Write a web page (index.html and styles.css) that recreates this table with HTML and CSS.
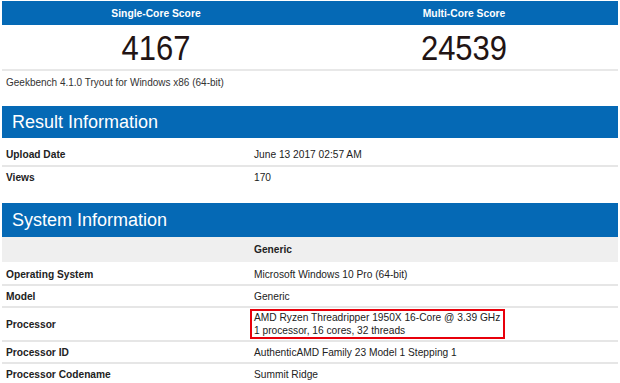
FILE: index.html
```html
<!DOCTYPE html>
<html>
<head>
<meta charset="utf-8">
<link rel="stylesheet" href="styles.css">
</head>
<body>
<div class="page">
  <div class="scores">
    <div class="score-head">
      <div class="col">Single-Core Score</div>
      <div class="col">Multi-Core Score</div>
    </div>
    <div class="score-vals">
      <div class="col">4167</div>
      <div class="col">24539</div>
    </div>
  </div>
  <div class="version">Geekbench 4.1.0 Tryout for Windows x86 (64-bit)</div>

  <div class="section result">
    <h2 class="title">Result Information</h2>
    <div class="row first"><div class="label">Upload Date</div><div class="value">June 13 2017 02:57 AM</div></div>
    <div class="row last"><div class="label">Views</div><div class="value">170</div></div>
  </div>

  <div class="section system">
    <h2 class="title">System Information</h2>
    <div class="row sub"><div class="label"></div><div class="value bold">Generic</div></div>
    <div class="row"><div class="label">Operating System</div><div class="value">Microsoft Windows 10 Pro (64-bit)</div></div>
    <div class="row"><div class="label">Model</div><div class="value">Generic</div></div>
    <div class="row"><div class="label">Processor</div><div class="value"><div class="hl">AMD Ryzen Threadripper 1950X 16-Core @ 3.39 GHz<br>1 processor, 16 cores, 32 threads</div></div></div>
    <div class="row"><div class="label">Processor ID</div><div class="value">AuthenticAMD Family 23 Model 1 Stepping 1</div></div>
    <div class="row last"><div class="label">Processor Codename</div><div class="value">Summit Ridge</div></div>
  </div>
</div>
</body>
</html>
```

FILE: styles.css
```css
html, body {
  margin: 0;
  padding: 0;
  background: #fff;
}
body {
  font-family: "Liberation Sans", Arial, sans-serif;
  color: #222;
}
.page {
  width: 616px;
  margin: 1px 2px 0;
}
.scores .score-head {
  display: flex;
  background: #0569b5;
  color: #fff;
  font-weight: bold;
  font-size: 10.3px;
  height: 24px;
  align-items: center;
}
.col {
  flex: 1;
  text-align: center;
}
.score-vals {
  display: flex;
  padding-top: 2px;
  box-sizing: border-box;
  align-items: center;
  font-size: 31px;
  color: #221414;
  border-bottom: 2px solid #e8e8e8;
  height: 46px;
}
.score-vals .col {
  transform: scaleY(1.15);
}
.version {
  font-size: 10px;
  color: #333;
  padding: 6px 4px 0;
  height: 35px;
  box-sizing: border-box;
}
.section .title {
  margin: 0;
  background: #0569b5;
  color: #fff;
  font-weight: normal;
  font-size: 18px;
  height: 32px;
  line-height: 32px;
  padding-left: 10px;
}
.system {
  margin-top: 16px;
}
.system .title {
  height: 34px;
  line-height: 34px;
}
.row {
  display: flex;
  align-items: center;
  min-height: 20px;
  border-bottom: 2px solid #e6e6e6;
  font-size: 10.2px;
  color: #222;
}
.row.first {
  min-height: 21px;
  padding-top: 6px;
}
.row.last {
  border-bottom: none;
}
.row.sub {
  background: #efefef;
  border-bottom: none;
  min-height: 25px;
  margin-bottom: 2px;
}
.label {
  width: 248px;
  padding-left: 4px;
  font-weight: bold;
  flex: none;
}
.value {
  flex: 1;
}
.value.bold {
  font-weight: bold;
}
.hl {
  display: inline-block;
  border: 2px solid #e8000b;
  padding: 0 3px 0 2px;
  margin: 1px 0 1px -4px;
  line-height: 13px;
}
```
